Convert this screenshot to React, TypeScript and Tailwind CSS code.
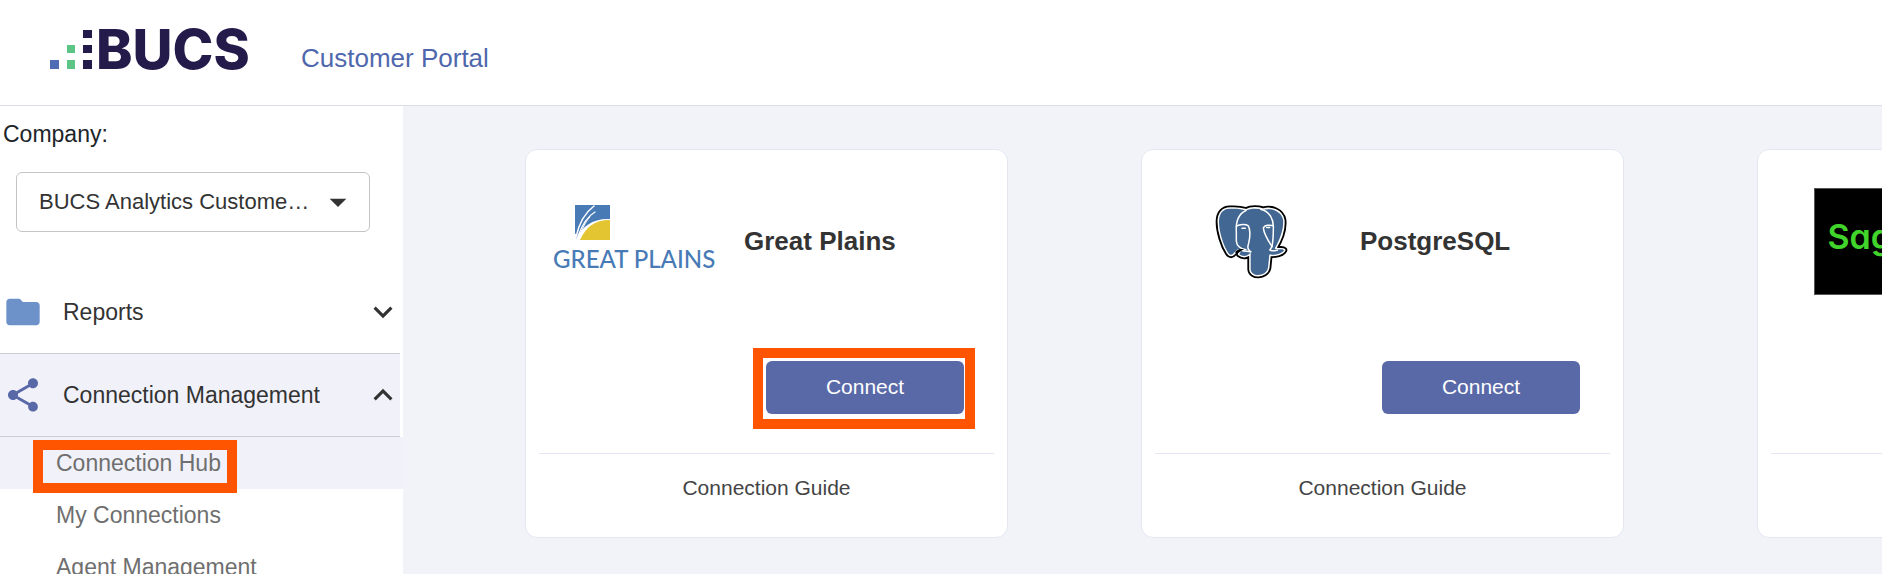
import type { ReactNode } from 'react'
import { MdArrowDropDown, MdExpandLess, MdExpandMore, MdFolder, MdShare } from 'react-icons/md'

const subItems = [
  { label: 'Connection Hub', active: true },
  { label: 'My Connections', active: false },
  { label: 'Agent Management', active: false }
]

function BucsLogo() {
  return (
    <svg viewBox="0 0 206 42" className="w-[206px] h-[42px] shrink-0 overflow-visible" role="img" aria-label="BUCS">
      <rect x="0" y="31" width="9" height="9" fill="#4f6db5" />
      <g fill="#5ac585">
        <rect x="17" y="16" width="8" height="8" />
        <rect x="17" y="31" width="8" height="9" />
      </g>
      <g fill="#241b4b">
        <rect x="33" y="1" width="9" height="8" />
        <rect x="33" y="16" width="9" height="8" />
        <rect x="33" y="31" width="9" height="9" />
      </g>
      <text x="46" y="40" fill="#241b4b" className="font-[Inter,sans-serif] font-extrabold text-[55px]">BUCS</text>
    </svg>
  )
}

function GreatPlainsLogo() {
  return (
    <svg viewBox="0 0 166 72" className="w-[166px] h-[72px]" role="img" aria-label="Great Plains">
      <rect x="23" y="0" width="35" height="35" fill="#487bb6" />
      <path d="M23 35V29C24 28 25 30 24 34C30 21 42 13 58 14V35Z" fill="#fff" />
      <path d="M28 35C34 22 42 15 58 15V35Z" fill="#e3c431" />
      <g fill="none" stroke="#fff" strokeLinecap="round">
        <path d="M24 32C27 18 34 7 42 1" strokeWidth="1.5" />
        <path d="M26 31C30 20 36 11 43 7" strokeWidth="1.2" />
        <path d="M28 29C32 20 35 15 38 12" strokeWidth="1" />
      </g>
      <text x="1" y="63" fill="#487bb6" className="font-[Lato,sans-serif] font-medium text-[24px]">GREAT PLAINS</text>
    </svg>
  )
}

const elephant =
  'M92 59C70 58 57 72 57 98C57 128 70 168 84 190C90 199 96 199 102 191L113 180L124 184L118 195C128 203 143 202 152 190V240C153 264 198 264 204 236L208 196C228 198 248 192 252 183C246 177 234 185 224 178C240 152 252 118 249 92C244 66 214 55 190 62C172 57 150 58 138 64C122 59 108 58 92 59Z'

function PostgresLogo() {
  return (
    <svg viewBox="42 45 222 224" className="w-[74px] h-[75px]" role="img" aria-label="PostgreSQL">
      <g strokeLinejoin="round">
        <path d={elephant} fill="#000" stroke="#000" strokeWidth="20" />
        <path d={elephant} fill="#fff" stroke="#fff" strokeWidth="9" />
        <path d={elephant} fill="#416792" />
      </g>
      <g fill="none" stroke="#fff" strokeWidth="4.5" strokeLinecap="round" strokeLinejoin="round">
        <path d="M138 64C115 74 107 100 109 130V156C110 170 122 180 138 182" />
        <path d="M109 111C120 105 137 104 145 110C151 122 150 145 146 162C142 174 142 180 152 188" />
        <path d="M182 60C208 66 222 90 220 118C220 140 219 156 216 172" />
        <path d="M220 110C208 106 194 108 190 116C192 136 204 154 216 172L210 182" />
        <path d="M210 182C218 188 226 184 232 183" />
        <path d="M126 117H136M200 115H209" />
        <path d="M152 188C142 186 132 186 126 184" />
      </g>
      <path d="M105 190C110 182 118 178 132 180C124 184 118 189 112 193Z" fill="#000" />
    </svg>
  )
}

function SageLogo() {
  return (
    <div className="size-[107px] shrink-0 bg-black border border-[#555] pl-[13px] pt-[21px]">
      <span className="block font-[Inter,sans-serif] [font-feature-settings:'cv11'] font-semibold text-[34px] leading-[54px] text-[#41d42b]">
        Sage
      </span>
    </div>
  )
}

const connectors = [
  { name: 'Great Plains', logo: <GreatPlainsLogo />, highlighted: true },
  { name: 'PostgreSQL', logo: <PostgresLogo />, highlighted: false },
  { name: 'Sage', logo: <SageLogo />, highlighted: false }
]

function ConnectorCard({ name, logo, highlighted }: { name: string; logo: ReactNode; highlighted: boolean }) {
  return (
    <article className="w-[483px] shrink-0 bg-white border border-[#e4e7f3] rounded-xl px-[13px]">
      <div className="flex items-center h-[182px]">
        <div className="w-48 shrink-0 flex justify-center">{logo}</div>
        <h2 className="ml-[13px] text-[26px] leading-8 font-bold text-[#333]">{name}</h2>
      </div>
      <div className="flex justify-end pt-[29px] pb-[39px] pr-[30px]">
        <div className="relative">
          <button type="button" className="block w-[198px] h-[53px] pb-0.5 rounded-md bg-[#5969a7] text-white text-[21px] leading-6">
            Connect
          </button>
          {highlighted && (
            <div className="absolute -left-[13px] -top-[13px] -right-[11px] -bottom-[15px] border-10 border-[#ff5500] pointer-events-none" />
          )}
        </div>
      </div>
      <div className="border-t border-[#e4e7f3] h-[84px] pt-[18px] text-center">
        <a href="#guide" className="text-[21px] leading-8 text-[#444]">Connection Guide</a>
      </div>
    </article>
  )
}

function Sidebar() {
  return (
    <aside className="w-[403px] shrink-0 bg-white pt-3 text-[23px] leading-8 text-[#333]">
      <label htmlFor="company" className="block pl-[3px] text-[#212529]">Company:</label>
      <div className="relative ml-4 mr-[33px] mt-[22px]">
        <select
          id="company"
          className="appearance-none block w-full h-[60px] pl-[22px] pr-[54px] rounded-md border border-[#c4c4c4] bg-white text-[22px] leading-8 text-ellipsis overflow-hidden whitespace-nowrap"
        >
          <option>BUCS Analytics Customer Portal</option>
        </select>
        <MdArrowDropDown size={40} className="absolute right-[12px] top-[10px] pointer-events-none" />
      </div>

      <nav className="mt-[38px]">
        <button type="button" className="flex items-center w-[400px] h-[83px] pl-[3px] text-left">
          <MdFolder size={40} className="text-[#6d91c9]" />
          <span className="ml-5 flex-1">Reports</span>
          <MdExpandMore size={38} className="-mr-0.5" />
        </button>
        <button
          type="button"
          className="flex items-center w-[400px] h-[84px] pl-[3px] text-left bg-[#f1f2f9] border-y border-[#cdced6]"
        >
          <MdShare size={40} className="text-[#5969a7]" />
          <span className="ml-5 flex-1">Connection Management</span>
          <MdExpandLess size={38} className="-mr-0.5" />
        </button>
        <ul className="text-[#6f6f6f]">
          {subItems.map((item) => (
            <li key={item.label} className={item.active ? 'relative bg-[#f1f2f9]' : ''}>
              <a href="#connections" className="flex items-center h-[52px] pl-14">{item.label}</a>
              {item.active && (
                <div className="absolute left-[33px] top-[3px] w-[204px] h-[53px] border-10 border-[#ff5500] pointer-events-none" />
              )}
            </li>
          ))}
        </ul>
      </nav>
    </aside>
  )
}

export default function App() {
  return (
    <div className="h-screen flex flex-col overflow-hidden bg-white font-['Liberation_Sans',Arial,sans-serif]">
      <header className="h-[106px] shrink-0 flex items-center border-b border-[#dcdde4] pl-[50px] pb-[5px]">
        <BucsLogo />
        <h1 className="ml-[45px] pt-4 text-[26px] leading-8 text-[#4f68ad]">Customer Portal</h1>
      </header>
      <div className="flex flex-1 min-h-0">
        <Sidebar />
        <main className="flex-1 min-w-0 overflow-hidden bg-[#f2f3f9] pt-[43px] pl-[122px]">
          <div className="flex items-start gap-[133px]">
            {connectors.map((connector) => (
              <ConnectorCard key={connector.name} {...connector} />
            ))}
          </div>
        </main>
      </div>
    </div>
  )
}
